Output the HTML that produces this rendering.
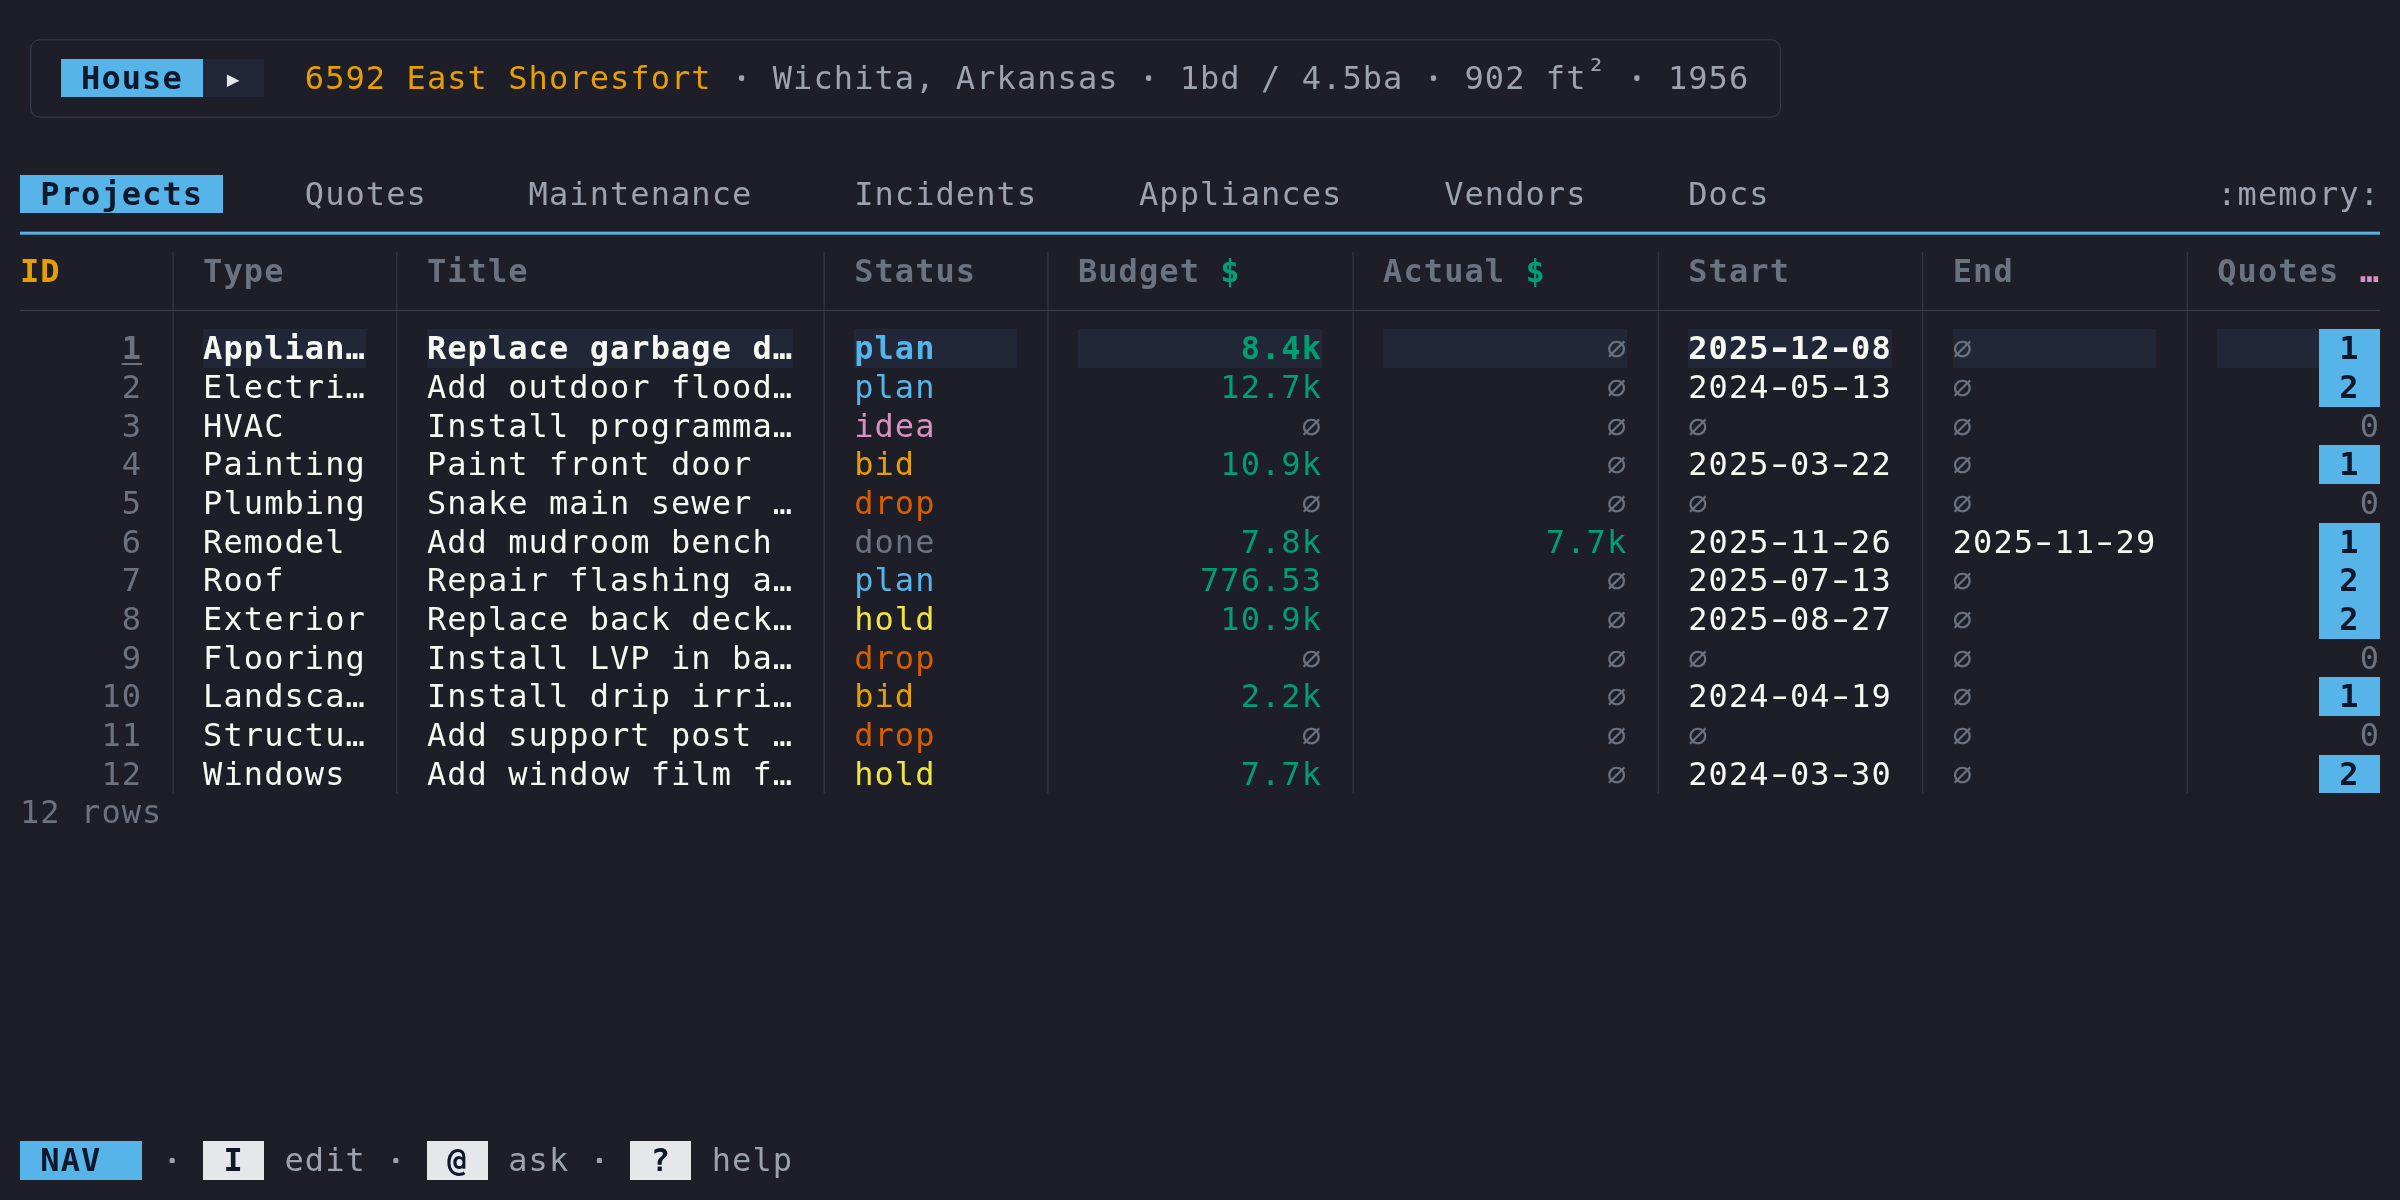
<!DOCTYPE html>
<html lang="en"><head><meta charset="utf-8"><title>micasa</title>
<style>
html,body{margin:0;padding:0;background:#1e1e28;}
body{width:2400px;height:1200px;position:relative;overflow:hidden;
 font-family:"DejaVu Sans Mono","Liberation Mono",monospace;font-size:32px;letter-spacing:1.079px;
 font-variant-ligatures:none;font-kerning:none;}
#term{position:absolute;left:0;top:0;width:2400px;height:1200px;will-change:transform;}
.s{position:absolute;display:block;height:38.667px;line-height:38.667px;white-space:pre;overflow:visible;box-sizing:border-box;padding-top:0px;}
.b{font-weight:bold} .i{font-style:italic} .ul{text-decoration:underline;text-decoration-thickness:2px;text-underline-offset:4px;text-decoration-skip-ink:none}
.accent{color:#56B4E9} .second{color:#E69F00} .success{color:#009E73} .warn{color:#F0E442}
.danger{color:#D55E00} .muted{color:#DA90C0} .bright{color:#f8f8f2} .text{color:#f8f8f2}
.light{color:#E5E7EB} .mid{color:#9CA3AF} .dim{color:#6B7280} .onacc{color:#0F172A}
.bgacc{background:#56B4E9} .bgsurf{background:#212737} .bgkey{background:#E5E7EB}
#lines{position:absolute;left:0;top:0;pointer-events:none}
.hy{display:inline-block;transform:scaleX(1.55);transform-origin:47% 50%}
.b .hy{transform:scaleX(1.33)}
.sup{position:relative;top:-7px}
.dot{clip-path:circle(3.05px at 9.7px 19.45px)}
</style></head>
<body>
<div id="term">
<div id="house">
<span class="s b onacc bgacc" style="left:60.69px;top:58.667px;width:142.414px"> House </span>
<span class="s light bgsurf" style="left:203.103px;top:58.667px;width:61.034px"> ▸ </span>
<span class="s second" style="left:304.828px;top:58.667px;width:406.897px">6592 East Shoresfort</span>
<span class="s mid b dot" style="left:732.069px;top:58.667px;width:20.345px">·</span>
<span class="s mid" style="left:772.759px;top:58.667px;width:345.862px">Wichita, Arkansas</span>
<span class="s mid b dot" style="left:1138.966px;top:58.667px;width:20.345px">·</span>
<span class="s mid" style="left:1179.655px;top:58.667px;width:223.793px">1bd / 4.5ba</span>
<span class="s mid b dot" style="left:1423.793px;top:58.667px;width:20.345px">·</span>
<span class="s mid" style="left:1464.483px;top:58.667px;width:142.414px">902 ft<span class="sup">²</span></span>
<span class="s mid b dot" style="left:1627.241px;top:58.667px;width:20.345px">·</span>
<span class="s mid" style="left:1667.931px;top:58.667px;width:81.379px">1956</span>
</div>
<div id="tabs">
<span class="s b onacc bgacc" style="left:20px;top:174.667px;width:203.448px"> Projects </span>
<span class="s mid" style="left:304.828px;top:174.667px;width:122.069px">Quotes</span>
<span class="s mid" style="left:528.621px;top:174.667px;width:223.793px">Maintenance</span>
<span class="s mid" style="left:854.138px;top:174.667px;width:183.103px">Incidents</span>
<span class="s mid" style="left:1138.966px;top:174.667px;width:203.448px">Appliances</span>
<span class="s mid" style="left:1444.138px;top:174.667px;width:142.414px">Vendors</span>
<span class="s mid" style="left:1688.276px;top:174.667px;width:81.379px">Docs</span>
<span class="s mid" style="left:2217.241px;top:174.667px;width:162.759px">:memory:</span>
</div>
<div id="projects">
<div class="thead">
<span class="s b second" style="left:20px;top:252px;width:40.69px">ID</span>
<span class="s b dim" style="left:203.103px;top:252px;width:81.379px">Type</span>
<span class="s b dim" style="left:426.897px;top:252px;width:101.724px">Title</span>
<span class="s b dim" style="left:854.138px;top:252px;width:122.069px">Status</span>
<span class="s b dim" style="left:1077.931px;top:252px;width:122.069px">Budget</span>
<span class="s b success" style="left:1220.345px;top:252px;width:20.345px">$</span>
<span class="s b dim" style="left:1383.103px;top:252px;width:122.069px">Actual</span>
<span class="s b success" style="left:1525.517px;top:252px;width:20.345px">$</span>
<span class="s b dim" style="left:1688.276px;top:252px;width:101.724px">Start</span>
<span class="s b dim" style="left:1952.759px;top:252px;width:61.034px">End</span>
<span class="s b dim" style="left:2217.241px;top:252px;width:122.069px">Quotes</span>
<span class="s b muted" style="left:2359.655px;top:252px;width:20.345px">…</span>
</div>
<div class="row sel">
<span class="s dim b ul" style="left:121.724px;top:329.333px;width:20.345px">1</span>
<span class="s bright b bgsurf" style="left:203.103px;top:329.333px;width:162.759px">Applian…</span>
<span class="s bright b bgsurf" style="left:426.897px;top:329.333px;width:366.207px">Replace garbage d…</span>
<span class="s accent b bgsurf" style="left:854.138px;top:329.333px;width:162.759px">plan</span>
<span class="s success b bgsurf" style="left:1077.931px;top:329.333px;width:244.138px">        8.4k</span>
<span class="s dim i bgsurf" style="left:1383.103px;top:329.333px;width:244.138px">           ∅</span>
<span class="s bright b bgsurf" style="left:1688.276px;top:329.333px;width:203.448px">2025<span class="hy">-</span>12<span class="hy">-</span>08</span>
<span class="s dim i bgsurf" style="left:1952.759px;top:329.333px;width:203.448px">∅</span>
<span class="s bgsurf" style="left:2217.241px;top:329.333px;width:101.724px"></span>
<span class="s b onacc bgacc" style="left:2318.966px;top:329.333px;width:61.034px"> 1 </span>
</div>
<div class="row">
<span class="s dim" style="left:20px;top:368px;width:122.069px">     2</span>
<span class="s text" style="left:203.103px;top:368px;width:162.759px">Electri…</span>
<span class="s text" style="left:426.897px;top:368px;width:366.207px">Add outdoor flood…</span>
<span class="s accent" style="left:854.138px;top:368px;width:81.379px">plan</span>
<span class="s success" style="left:1077.931px;top:368px;width:244.138px">       12.7k</span>
<span class="s dim i" style="left:1383.103px;top:368px;width:244.138px">           ∅</span>
<span class="s text" style="left:1688.276px;top:368px;width:203.448px">2024<span class="hy">-</span>05<span class="hy">-</span>13</span>
<span class="s dim i" style="left:1952.759px;top:368px;width:20.345px">∅</span>
<span class="s b onacc bgacc" style="left:2318.966px;top:368px;width:61.034px"> 2 </span>
</div>
<div class="row">
<span class="s dim" style="left:20px;top:406.667px;width:122.069px">     3</span>
<span class="s text" style="left:203.103px;top:406.667px;width:81.379px">HVAC</span>
<span class="s text" style="left:426.897px;top:406.667px;width:366.207px">Install programma…</span>
<span class="s muted" style="left:854.138px;top:406.667px;width:81.379px">idea</span>
<span class="s dim i" style="left:1077.931px;top:406.667px;width:244.138px">           ∅</span>
<span class="s dim i" style="left:1383.103px;top:406.667px;width:244.138px">           ∅</span>
<span class="s dim i" style="left:1688.276px;top:406.667px;width:20.345px">∅</span>
<span class="s dim i" style="left:1952.759px;top:406.667px;width:20.345px">∅</span>
<span class="s dim" style="left:2217.241px;top:406.667px;width:162.759px">       0</span>
</div>
<div class="row">
<span class="s dim" style="left:20px;top:445.333px;width:122.069px">     4</span>
<span class="s text" style="left:203.103px;top:445.333px;width:162.759px">Painting</span>
<span class="s text" style="left:426.897px;top:445.333px;width:325.517px">Paint front door</span>
<span class="s second" style="left:854.138px;top:445.333px;width:61.034px">bid</span>
<span class="s success" style="left:1077.931px;top:445.333px;width:244.138px">       10.9k</span>
<span class="s dim i" style="left:1383.103px;top:445.333px;width:244.138px">           ∅</span>
<span class="s text" style="left:1688.276px;top:445.333px;width:203.448px">2025<span class="hy">-</span>03<span class="hy">-</span>22</span>
<span class="s dim i" style="left:1952.759px;top:445.333px;width:20.345px">∅</span>
<span class="s b onacc bgacc" style="left:2318.966px;top:445.333px;width:61.034px"> 1 </span>
</div>
<div class="row">
<span class="s dim" style="left:20px;top:484px;width:122.069px">     5</span>
<span class="s text" style="left:203.103px;top:484px;width:162.759px">Plumbing</span>
<span class="s text" style="left:426.897px;top:484px;width:366.207px">Snake main sewer …</span>
<span class="s danger" style="left:854.138px;top:484px;width:81.379px">drop</span>
<span class="s dim i" style="left:1077.931px;top:484px;width:244.138px">           ∅</span>
<span class="s dim i" style="left:1383.103px;top:484px;width:244.138px">           ∅</span>
<span class="s dim i" style="left:1688.276px;top:484px;width:20.345px">∅</span>
<span class="s dim i" style="left:1952.759px;top:484px;width:20.345px">∅</span>
<span class="s dim" style="left:2217.241px;top:484px;width:162.759px">       0</span>
</div>
<div class="row">
<span class="s dim" style="left:20px;top:522.667px;width:122.069px">     6</span>
<span class="s text" style="left:203.103px;top:522.667px;width:142.414px">Remodel</span>
<span class="s text" style="left:426.897px;top:522.667px;width:345.862px">Add mudroom bench</span>
<span class="s dim" style="left:854.138px;top:522.667px;width:81.379px">done</span>
<span class="s success" style="left:1077.931px;top:522.667px;width:244.138px">        7.8k</span>
<span class="s success" style="left:1383.103px;top:522.667px;width:244.138px">        7.7k</span>
<span class="s text" style="left:1688.276px;top:522.667px;width:203.448px">2025<span class="hy">-</span>11<span class="hy">-</span>26</span>
<span class="s text" style="left:1952.759px;top:522.667px;width:203.448px">2025<span class="hy">-</span>11<span class="hy">-</span>29</span>
<span class="s b onacc bgacc" style="left:2318.966px;top:522.667px;width:61.034px"> 1 </span>
</div>
<div class="row">
<span class="s dim" style="left:20px;top:561.333px;width:122.069px">     7</span>
<span class="s text" style="left:203.103px;top:561.333px;width:81.379px">Roof</span>
<span class="s text" style="left:426.897px;top:561.333px;width:366.207px">Repair flashing a…</span>
<span class="s accent" style="left:854.138px;top:561.333px;width:81.379px">plan</span>
<span class="s success" style="left:1077.931px;top:561.333px;width:244.138px">      776.53</span>
<span class="s dim i" style="left:1383.103px;top:561.333px;width:244.138px">           ∅</span>
<span class="s text" style="left:1688.276px;top:561.333px;width:203.448px">2025<span class="hy">-</span>07<span class="hy">-</span>13</span>
<span class="s dim i" style="left:1952.759px;top:561.333px;width:20.345px">∅</span>
<span class="s b onacc bgacc" style="left:2318.966px;top:561.333px;width:61.034px"> 2 </span>
</div>
<div class="row">
<span class="s dim" style="left:20px;top:600px;width:122.069px">     8</span>
<span class="s text" style="left:203.103px;top:600px;width:162.759px">Exterior</span>
<span class="s text" style="left:426.897px;top:600px;width:366.207px">Replace back deck…</span>
<span class="s warn" style="left:854.138px;top:600px;width:81.379px">hold</span>
<span class="s success" style="left:1077.931px;top:600px;width:244.138px">       10.9k</span>
<span class="s dim i" style="left:1383.103px;top:600px;width:244.138px">           ∅</span>
<span class="s text" style="left:1688.276px;top:600px;width:203.448px">2025<span class="hy">-</span>08<span class="hy">-</span>27</span>
<span class="s dim i" style="left:1952.759px;top:600px;width:20.345px">∅</span>
<span class="s b onacc bgacc" style="left:2318.966px;top:600px;width:61.034px"> 2 </span>
</div>
<div class="row">
<span class="s dim" style="left:20px;top:638.667px;width:122.069px">     9</span>
<span class="s text" style="left:203.103px;top:638.667px;width:162.759px">Flooring</span>
<span class="s text" style="left:426.897px;top:638.667px;width:366.207px">Install LVP in ba…</span>
<span class="s danger" style="left:854.138px;top:638.667px;width:81.379px">drop</span>
<span class="s dim i" style="left:1077.931px;top:638.667px;width:244.138px">           ∅</span>
<span class="s dim i" style="left:1383.103px;top:638.667px;width:244.138px">           ∅</span>
<span class="s dim i" style="left:1688.276px;top:638.667px;width:20.345px">∅</span>
<span class="s dim i" style="left:1952.759px;top:638.667px;width:20.345px">∅</span>
<span class="s dim" style="left:2217.241px;top:638.667px;width:162.759px">       0</span>
</div>
<div class="row">
<span class="s dim" style="left:20px;top:677.333px;width:122.069px">    10</span>
<span class="s text" style="left:203.103px;top:677.333px;width:162.759px">Landsca…</span>
<span class="s text" style="left:426.897px;top:677.333px;width:366.207px">Install drip irri…</span>
<span class="s second" style="left:854.138px;top:677.333px;width:61.034px">bid</span>
<span class="s success" style="left:1077.931px;top:677.333px;width:244.138px">        2.2k</span>
<span class="s dim i" style="left:1383.103px;top:677.333px;width:244.138px">           ∅</span>
<span class="s text" style="left:1688.276px;top:677.333px;width:203.448px">2024<span class="hy">-</span>04<span class="hy">-</span>19</span>
<span class="s dim i" style="left:1952.759px;top:677.333px;width:20.345px">∅</span>
<span class="s b onacc bgacc" style="left:2318.966px;top:677.333px;width:61.034px"> 1 </span>
</div>
<div class="row">
<span class="s dim" style="left:20px;top:716px;width:122.069px">    11</span>
<span class="s text" style="left:203.103px;top:716px;width:162.759px">Structu…</span>
<span class="s text" style="left:426.897px;top:716px;width:366.207px">Add support post …</span>
<span class="s danger" style="left:854.138px;top:716px;width:81.379px">drop</span>
<span class="s dim i" style="left:1077.931px;top:716px;width:244.138px">           ∅</span>
<span class="s dim i" style="left:1383.103px;top:716px;width:244.138px">           ∅</span>
<span class="s dim i" style="left:1688.276px;top:716px;width:20.345px">∅</span>
<span class="s dim i" style="left:1952.759px;top:716px;width:20.345px">∅</span>
<span class="s dim" style="left:2217.241px;top:716px;width:162.759px">       0</span>
</div>
<div class="row">
<span class="s dim" style="left:20px;top:754.667px;width:122.069px">    12</span>
<span class="s text" style="left:203.103px;top:754.667px;width:142.414px">Windows</span>
<span class="s text" style="left:426.897px;top:754.667px;width:366.207px">Add window film f…</span>
<span class="s warn" style="left:854.138px;top:754.667px;width:81.379px">hold</span>
<span class="s success" style="left:1077.931px;top:754.667px;width:244.138px">        7.7k</span>
<span class="s dim i" style="left:1383.103px;top:754.667px;width:244.138px">           ∅</span>
<span class="s text" style="left:1688.276px;top:754.667px;width:203.448px">2024<span class="hy">-</span>03<span class="hy">-</span>30</span>
<span class="s dim i" style="left:1952.759px;top:754.667px;width:20.345px">∅</span>
<span class="s b onacc bgacc" style="left:2318.966px;top:754.667px;width:61.034px"> 2 </span>
</div>
<span class="s dim" style="left:20px;top:793.333px;width:142.414px">12 rows</span>
</div>
<div id="status">
<span class="s b onacc bgacc" style="left:20px;top:1141.333px;width:122.069px"> NAV  </span>
<span class="s mid b dot" style="left:162.414px;top:1141.333px;width:20.345px">·</span>
<span class="s b onacc bgkey" style="left:203.103px;top:1141.333px;width:61.034px"> I </span>
<span class="s mid" style="left:284.483px;top:1141.333px;width:81.379px">edit</span>
<span class="s mid b dot" style="left:386.207px;top:1141.333px;width:20.345px">·</span>
<span class="s b onacc bgkey" style="left:426.897px;top:1141.333px;width:61.034px"> @ </span>
<span class="s mid" style="left:508.276px;top:1141.333px;width:61.034px">ask</span>
<span class="s mid b dot" style="left:589.655px;top:1141.333px;width:20.345px">·</span>
<span class="s b onacc bgkey" style="left:630.345px;top:1141.333px;width:61.034px"> ? </span>
<span class="s mid" style="left:711.724px;top:1141.333px;width:81.379px">help</span>
</div>
<svg id="lines" width="2400" height="1200" viewBox="0 0 2400 1200">
<rect x="30.672" y="39.833" width="1749.655" height="77.333" rx="9" ry="9" fill="none" stroke="#38404F" stroke-width="1"/>
<rect x="20" y="231.667" width="2360" height="3" fill="#56B4E9"/>
<rect x="172.586" y="252" width="1" height="541.333" fill="#393E4B"/>
<rect x="396.379" y="252" width="1" height="541.333" fill="#393E4B"/>
<rect x="823.621" y="252" width="1" height="541.333" fill="#393E4B"/>
<rect x="1047.414" y="252" width="1" height="541.333" fill="#393E4B"/>
<rect x="1352.586" y="252" width="1" height="541.333" fill="#393E4B"/>
<rect x="1657.759" y="252" width="1" height="541.333" fill="#393E4B"/>
<rect x="1922.241" y="252" width="1" height="541.333" fill="#393E4B"/>
<rect x="2186.724" y="252" width="1" height="541.333" fill="#393E4B"/>
<rect x="20" y="310" width="2360" height="1" fill="#393E4B"/>
</svg>
</div>
</body></html>
